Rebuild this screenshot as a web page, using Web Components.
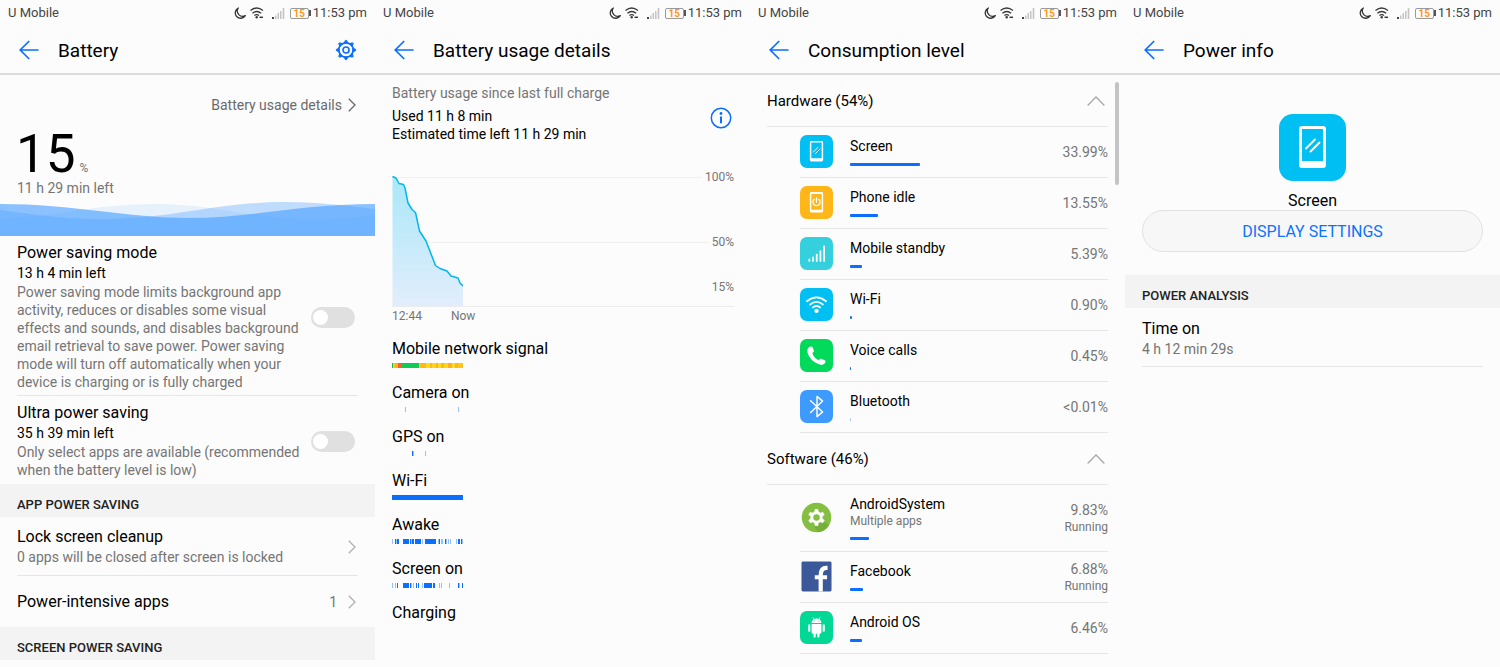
<!DOCTYPE html>
<html lang="en">
<head>
<meta charset="utf-8">
<meta name="viewport" content="width=device-width, initial-scale=1">
<title>Battery</title>
<style>
  :root {
    --accent: #0a6eff;
    --ink: #000;
    --muted: #757575;
    --rule: #e6e6e6;
    --band: #f3f3f3;
  }
  body {
    margin: 0;
    background: #fcfcfc;
    color: var(--ink);
    font-family: Roboto, "Liberation Sans", sans-serif;
    font-size: 16px;
    line-height: 20px;
  }
  main {
    display: grid;
    grid-template-columns: repeat(4, minmax(0, 1fr));
  }
</style>
</head>
<body>
<main>
  <phone-screen heading="Battery" settings>
    <battery-summary level="15" left="11 h 29 min left"></battery-summary>
    <toggle-row heading="Power saving mode" left="13 h 4 min left">Power saving mode limits background app activity, reduces or disables some visual effects and sounds, and disables background email retrieval to save power. Power saving mode will turn off automatically when your device is charging or is fully charged</toggle-row>
    <toggle-row heading="Ultra power saving" left="35 h 39 min left" last>Only select apps are available (recommended when the battery level is low)</toggle-row>
    <section-head>APP POWER SAVING</section-head>
    <link-row heading="Lock screen cleanup" note="0 apps will be closed after screen is locked"></link-row>
    <link-row heading="Power-intensive apps" value="1" last></link-row>
    <section-head>SCREEN POWER SAVING</section-head>
  </phone-screen>

  <phone-screen heading="Battery usage details">
    <usage-summary></usage-summary>
    <level-chart></level-chart>
    <time-line heading="Mobile network signal" kind="signal"></time-line>
    <time-line heading="Camera on" spans="13 1 l,66 1 l"></time-line>
    <time-line heading="GPS on" spans="20 1,21 1 l,33 1 l"></time-line>
    <time-line heading="Wi-Fi" spans="0 71"></time-line>
    <time-line heading="Awake" spans="0 1 l,3 1,4 1 l,5 1,6 1,11 4,15 2,18 1,19 1 l,20 2,23 2,25 4,30 1 l,33 9,42 2,46 1 l,47 1,49 2 l,53 1,54 1 l,56 1 l,58 1 l,64 1 l,66 1,67 1,69 1,70 1 l"></time-line>
    <time-line heading="Screen on" spans="0 1 l,3 1 l,5 1,11 4,15 2,18 1,19 1 l,21 1 l,24 1,26 1,30 1 l,32 2,34 6,41 2,47 1 l,49 1 l,57 1 l,66 1,67 1 l,70 1"></time-line>
    <time-line heading="Charging"></time-line>
  </phone-screen>

  <phone-screen heading="Consumption level" scrolled>
    <usage-group heading="Hardware (54%)">
      <usage-row icon="screen" heading="Screen" value="33.99%" bar="70"></usage-row>
      <usage-row icon="idle" heading="Phone idle" value="13.55%" bar="28"></usage-row>
      <usage-row icon="standby" heading="Mobile standby" value="5.39%" bar="12"></usage-row>
      <usage-row icon="wifi" heading="Wi-Fi" value="0.90%" bar="2"></usage-row>
      <usage-row icon="call" heading="Voice calls" value="0.45%" bar="1"></usage-row>
      <usage-row icon="bluetooth" heading="Bluetooth" value="&lt;0.01%" bar="1" faint></usage-row>
    </usage-group>
    <usage-group heading="Software (46%)">
      <usage-row icon="system" heading="AndroidSystem" note="Multiple apps" value="9.83%" state="Running" bar="19"></usage-row>
      <usage-row icon="facebook" heading="Facebook" value="6.88%" state="Running" bar="13"></usage-row>
      <usage-row icon="android" heading="Android OS" value="6.46%" bar="12"></usage-row>
    </usage-group>
  </phone-screen>

  <phone-screen heading="Power info">
    <app-hero icon="screen" heading="Screen" action="DISPLAY SETTINGS"></app-hero>
    <section-head>POWER ANALYSIS</section-head>
    <info-row heading="Time on" note="4 h 12 min 29s"></info-row>
  </phone-screen>
</main>

<script>
const ICONS = {
  back: ['0 0 20 20', '<path d="M10.200 1 1.200 10l9 9M1.200 10H19.600" fill="none" stroke="#0a6eff" stroke-width="1.700"/>'],
  gear: ['0 0 24 24', (() => {
    let teeth = '';
    for (let i = 0; i < 8; i++) teeth += `<path d="M10 4.500 11.300 1.500h1.400L14 4.500z" transform="rotate(${i * 45} 12 12)"/>`;
    return `<g stroke="#0a6eff"><g fill="#0a6eff" stroke-width="1" stroke-linejoin="round">${teeth}</g>
      <circle cx="12" cy="12" r="7.900" fill="none" stroke-width="1.900"/><circle cx="12" cy="12" r="3.300" fill="none" stroke-width="1.800"/></g>`;
  })()],
  info: ['0 0 22 22', '<circle cx="11" cy="11" r="9.700" fill="none" stroke="#0a6eff" stroke-width="1.500"/><path d="M11 9.600v6.600" stroke="#0a6eff" stroke-width="2"/><circle cx="11" cy="6.500" r="1.400" fill="#0a6eff"/>'],
  next: ['0 0 8 14', '<path d="M.8.8 7 7 .8 13.200" fill="none" stroke="currentColor" stroke-width="1.300"/>'],
  up: ['0 0 18 10', '<path d="M.6 9.500 9 1l8.400 8.500" fill="none" stroke="#a8a8a8" stroke-width="1.300"/>'],
  moon: ['0 0 12 12', '<path d="M4.300 1A5.400 5.400 0 1 0 11.300 8.600 5.300 5.300 0 0 1 4.300 1Z" fill="none" stroke="#333" stroke-width="1.300" stroke-linejoin="round"/>'],
  wifiSmall: ['0 0 14 12', '<g fill="none" stroke="#3a3a3a" stroke-width="1.300"><path d="M.5 3.400Q6.700-1.400 13 3.400M2.400 6.200Q6.700 2.800 11.200 6.200M4.400 8.500Q6.700 6.800 9 8.500"/></g><circle cx="6.700" cy="10.300" r="1.200" fill="#3a3a3a"/><path d="M9.500 10.300h3.500" stroke="#3a3a3a" stroke-width="1.500"/>'],
  signal: ['0 0 13 11', '<path d="M0 9h2v2H0z" fill="#444"/><path d="M3 7.500h1.500V11H3zM5.500 5H7v6H5.500zM8 3h1.500v8H8zM10.700 0h1.600v11h-1.600z" fill="#c4c4c4"/>'],
  screen: ['0 0 67 67', '<rect width="67" height="67" rx="14" fill="#00c0f3"/><path fill-rule="evenodd" d="M23 12h21a3 3 0 0 1 3 3v36a3 3 0 0 1-3 3H23a3 3 0 0 1-3-3V15a3 3 0 0 1 3-3ZM23 15v32h21V15Z" fill="#fff"/><path d="m27 34.500 9-9M31.500 37.500l9-9" stroke="#fff" stroke-width="1.900" stroke-linecap="round"/>'],
  idle: ['0 0 67 67', '<rect width="67" height="67" rx="14" fill="#ffb619"/><path fill-rule="evenodd" d="M23 12h21a3 3 0 0 1 3 3v36a3 3 0 0 1-3 3H23a3 3 0 0 1-3-3V15a3 3 0 0 1 3-3ZM23 16v32h21V16Z" fill="#fff"/><path d="M33.500 24v9M29 27a7.200 7.200 0 1 0 9 0" fill="none" stroke="#fff" stroke-width="2.600" stroke-linecap="round"/>'],
  standby: ['0 0 67 67', '<rect width="67" height="67" rx="14" fill="#35d0de"/><path d="M19 45.500v3M26.500 41.500v7M34 36v12.500M41.500 28.500v20M49 19v29.500" stroke="#fff" stroke-width="3.600" stroke-linecap="round"/>'],
  wifi: ['0 0 67 67', '<rect width="67" height="67" rx="14" fill="#00c0f3"/><g fill="none" stroke="#fff" stroke-width="3.600" stroke-linecap="round"><path d="M14 27q19.500-16 39 0M20.500 33.500q13-10.500 26 0M26 39.500q7.500-6 15 0"/></g><circle cx="33.500" cy="46.500" r="4.400" fill="#fff"/>'],
  call: ['0 0 67 67', '<rect width="67" height="67" rx="14" fill="#00d95a"/><path d="M18 17c2-2.500 6-3 8 .5l2 6c.6 2-1 4-3 5 2 7 7 12 13 14.500 1.500-2 3.500-3.500 5.500-2.700l6.500 3c2.500 1.200 2.500 4 0 6.500-3.500 3.500-8 3.500-13 1.200C26 46.500 17.500 37 15 26.500 14.200 22.500 15.500 19.500 18 17Z" fill="#fff"/>'],
  bluetooth: ['0 0 67 67', '<rect width="67" height="67" rx="14" fill="#3d9bff"/><path d="M21.500 22 46 44.500 34.500 54V13L46 22.500 21.500 45.500" fill="none" stroke="#fff" stroke-width="2.900" stroke-linejoin="round" stroke-linecap="round"/>'],
  system: ['0 0 67 67', (() => {
    let teeth = '';
    for (let i = 0; i < 6; i++) teeth += `<path d="M29.500 24 30.500 17h6L37.500 24z" transform="rotate(${i * 60} 33.500 33.500)"/>`;
    return `<circle cx="33.500" cy="33.500" r="30" fill="#84bf41"/><path d="M45 40 59 49A30 30 0 0 1 36 63.400L28 49Z" fill="#6fa635" opacity=".7"/><g fill="#fff" stroke="#fff" stroke-width="1" stroke-linejoin="round">${teeth}</g><circle cx="33.500" cy="33.500" r="9.500" fill="none" stroke="#fff" stroke-width="6"/><circle cx="33.500" cy="33.500" r="5.500" fill="#84bf41"/>`;
  })()],
  facebook: ['0 0 67 67', '<rect x="3" y="3" width="61" height="61" rx="3" fill="#3b5998"/><path d="M42 64V31c0-9 3-15 12-15h2M30 35h25" fill="none" stroke="#fff" stroke-width="8.500"/>'],
  android: ['0 0 67 67', '<rect width="67" height="67" rx="14" fill="#02d896"/><g fill="#fff"><path d="M23.500 24.500a10 9.500 0 0 1 20 0ZM23.500 26.500h20V43a3 3 0 0 1-3 3h-14a3 3 0 0 1-3-3Z"/></g><path d="M26.500 13.500l3 5M40.500 13.500l-3 5" stroke="#fff" stroke-width="1.500" stroke-linecap="round"/><path d="M18.800 29v11M48.200 29v11M29.700 45v7M37.300 45v7" stroke="#fff" stroke-width="4.400" stroke-linecap="round"/><circle cx="29" cy="21" r="1" fill="#02d896"/><circle cx="38" cy="21" r="1" fill="#02d896"/>']
};

class Base extends HTMLElement {
  connectedCallback() {
    if (this.shadowRoot) return;
    const tpl = document.createElement('template');
    tpl.innerHTML = `<style>
      :host { display: block; box-sizing: border-box; }
      *, ::before { box-sizing: border-box; }
      h1, h2, h3, p { margin: 0; font-weight: 400; font-size: 16px; line-height: 20px; }
      button { margin: 0; padding: 0; border: 0; background: none; font: inherit; color: inherit; cursor: pointer; }
      a { color: inherit; text-decoration: none; }
      ${this.css()}</style>${this.html()}`;
    this.attachShadow({ mode: 'open' }).append(tpl.content.cloneNode(true));
  }
  css() { return ''; }
  html() { return ''; }
  at(name) { return (this.getAttribute(name) || '').replace(/</g, '&lt;'); }
}
const define = (name, css, html) => customElements.define(name, class extends Base {
  css() { return typeof css === 'function' ? css(this) : css; }
  html() { return html(this); }
});

define('sys-icon', el => `
  :host { flex: none; width: ${el.at('w')}px; height: ${el.at('h') || el.at('w')}px; }
  svg { display: block; width: 100%; height: 100%; }`,
  el => { const [box, body] = ICONS[el.at('name')]; return `<svg viewBox="${box}" aria-hidden="true">${body}</svg>`; });

define('status-bar', `
  :host { display: flex; align-items: center; height: 26px; padding: 0 8px; font-size: 13px; line-height: 16px; color: #444; }
  .carrier { flex: 1; }
  .wifi { margin: 0 8px 0 4px; }
  .cell { display: flex; align-items: center; margin: 0 2px 0 5px; }
  .cell b { width: 19px; height: 11px; border: 1px solid #9a9a9a; border-radius: 2px; font-size: 10px; line-height: 9px; text-align: center; color: #ff9518; }
  .cell::after { content: ""; width: 2px; height: 6px; background: #555; }`,
  () => `<span class="carrier">U Mobile</span>
    <sys-icon name="moon" w="12"></sys-icon>
    <sys-icon class="wifi" name="wifiSmall" w="14" h="12"></sys-icon>
    <sys-icon name="signal" w="13" h="11"></sys-icon>
    <span class="cell"><b>15</b></span>
    <time>11:53 pm</time>`);

define('phone-screen', `
  :host { position: relative; min-width: 0; }
  header { display: flex; align-items: center; height: 49px; padding: 0 18px 0 19px; border-bottom: 2px solid #dcdcdc; }
  h1 { flex: 1; margin-left: 19px; padding-top: 2px; font-size: 19px; line-height: 24px; }
  .thumb { position: absolute; top: 82px; right: 6px; width: 4px; height: 103px; border-radius: 2px; background: #c4c4c4; }`,
  el => `<status-bar></status-bar>
    <header><button aria-label="Back"><sys-icon name="back" w="20"></sys-icon></button><h1>${el.at('heading')}</h1>
    ${el.hasAttribute('settings') ? '<button aria-label="Settings"><sys-icon name="gear" w="22"></sys-icon></button>' : ''}</header>
    <slot></slot>${el.hasAttribute('scrolled') ? '<div class="thumb"></div>' : ''}`);

define('battery-summary', `
  :host { color: var(--muted); }
  a { display: flex; justify-content: flex-end; align-items: center; gap: 6px; padding: 20px 19px 0 0; font-size: 14px; line-height: 20px; color: #6a6a6a; }
  .level { display: flex; align-items: baseline; gap: 4px; padding: 14px 16px 0; }
  .level span { font-size: 12px; line-height: 16px; }
  strong { font-size: 53px; line-height: 50px; font-weight: 400; color: #000; }
  .left { padding: 0 17px; font-size: 14px; line-height: 18px; }
  svg { display: block; width: 100%; height: 34px; margin-top: 5px; }`,
  el => `<a href="#details">Battery usage details<sys-icon name="next" w="8" h="14"></sys-icon></a>
    <div class="level"><strong>${el.at('level')}</strong><span>%</span></div>
    <p class="left">${el.at('left')}</p>
    <svg viewBox="0 0 375 34" preserveAspectRatio="none" aria-hidden="true" fill="#4da1ff">
      <path opacity=".12" d="M0 17C60 14 95 2 155 2S250 17 310 17 360 14 375 12V34H0Z"/>
      <path opacity=".35" d="M0 8C30 12 60 17 100 17 175 17 215 0 285 0 320 0 350 4 375 7V34H0Z"/>
      <path opacity=".65" d="M0 2C75 2 125 16 190 16 250 16 300 2 375 2V34H0Z"/>
    </svg>`);

define('toggle-row', el => `
  :host { padding: 0 17px; }
  .row { display: flex; align-items: center; justify-content: space-between; padding: 7px 3px ${el.hasAttribute('last') ? 5 : 4}px 0; ${el.hasAttribute('last') ? '' : 'border-bottom: 1px solid var(--rule);'} }
  label { width: 288px; }
  .left, .note { display: block; font-size: 14px; line-height: 18px; }
  .title { display: block; line-height: 20px; }
  .left { line-height: 20px; }
  .note { color: var(--muted); }
  input { appearance: none; flex: none; width: 44px; height: 21px; margin: 0; padding: 3px 2px; border-radius: 11px; background: #e0e0e0; }
  input::before { content: ""; display: block; width: 15px; height: 15px; border-radius: 50%; background: #fff; }
  input:checked { background: var(--accent); padding-left: 26px; }`,
  el => `<div class="row"><label for="t"><span class="title">${el.at('heading')}</span><span class="left">${el.at('left')}</span><span class="note"><slot></slot></span></label><input type="checkbox" id="t"></div>`);

define('section-head', `
  :host { padding: 11px 17px 3px; background: var(--band); }
  h2 { font-size: 13px; font-weight: 500; line-height: 19px; color: #222; }`,
  () => `<h2><slot></slot></h2>`);

define('link-row', el => `
  :host { padding: 0 17px; }
  a { display: flex; align-items: center; gap: 11px; min-height: ${el.hasAttribute('note') ? 59 : 51}px; padding: 1px 2px 0 0; ${el.hasAttribute('last') ? '' : 'border-bottom: 1px solid var(--rule);'} }
  .text { flex: 1; }
  p, .value { font-size: 14px; line-height: 20px; color: var(--muted); }
  sys-icon { color: #b0b0b0; }`,
  el => `<a href="#open"><span class="text"><h3>${el.at('heading')}</h3>${el.at('note') ? `<p>${el.at('note')}</p>` : ''}</span>
    <span class="value">${el.at('value')}</span><sys-icon name="next" w="8" h="14"></sys-icon></a>`);

define('usage-summary', `
  :host { display: flex; justify-content: space-between; align-items: center; padding: 8px 18px 0 17px; }
  p { font-size: 14px; line-height: 18px; }
  .since { line-height: 20px; margin-bottom: 4px; color: var(--muted); }
  button { margin-top: 9px; }`,
  () => `<div><p class="since">Battery usage since last full charge</p><p>Used 11 h 8 min</p><p>Estimated time left 11 h 29 min</p></div>
    <button aria-label="About battery usage"><sys-icon name="info" w="22"></sys-icon></button>`);

define('level-chart', `
  :host { padding: 26px 16px 15px 17px; font-size: 12px; line-height: 16px; color: var(--muted); }
  .plot { position: relative; border-bottom: 1px solid #ececec; padding-bottom: 11px; }
  .tick { display: flex; align-items: center; gap: 3px; }
  .tick i { flex: 1; height: 1px; background: #f0f0f0; }
  .half { margin-top: 49px; }
  .now { margin-top: 29px; justify-content: flex-end; }
  svg { position: absolute; left: 0; bottom: 0; width: 72px; height: 131px; }
  .axis { display: flex; gap: 29px; padding-top: 1px; }`,
  () => `<div class="plot">
      <div class="tick"><i></i>100%</div><div class="tick half"><i></i>50%</div><div class="tick now">15%</div>
      <svg viewBox="0 0 72 131" role="img" aria-label="Battery level since last charge">
        <defs><linearGradient id="g" x2="0" y2="1"><stop stop-color="#a9e8f8"/><stop offset="1" stop-color="#e2edfc"/></linearGradient></defs>
        <path d="M.5 1.500 4 3 7 8.500 11.500 9.500 13 13 16 28 20 34.500 23.500 37.500 27.500 56 34 66 43.500 90.500 48 93.500 55 96 59 101 66 103 68 108 71 111V131H.5Z" fill="url(#g)"/>
        <path d="M.5 1.500 4 3 7 8.500 11.500 9.500 13 13 16 28 20 34.500 23.500 37.500 27.500 56 34 66 43.500 90.500 48 93.500 55 96 59 101 66 103 68 108 71 111" fill="none" stroke="#00b7ee" stroke-width="1.500" stroke-linejoin="round"/>
      </svg></div>
    <div class="axis"><span>12:44</span><span>Now</span></div>`);

const SIGNAL = [[0,1,'#12b84a'],[1,1,'#d8e030'],[2,1,'#ffc61a'],[3,3,'#ffb020'],[6,3,'#f2622b'],[9,18,'#10cc55'],[27,2,'#ffc61a'],[29,4,'#ffb81c'],[33,1,'#b6dc3c'],[34,4,'#ffdc14'],[38,2,'#ffb81c'],[40,4,'#ffd414'],[44,2,'#ffb020'],[46,3,'#ffdc14'],[49,3,'#ffb81c'],[52,4,'#ffd814'],[56,4,'#ffb020'],[60,3,'#ffdc14'],[63,3,'#ffb81c'],[66,5,'#ffc61a']];
define('time-line', `
  :host { padding: 0 17px; }
  svg { display: block; width: 71px; height: 5px; margin: 4px 0 15px; }`,
  el => {
    const spans = el.at('kind') === 'signal' ? SIGNAL
      : el.at('spans').split(',').filter(Boolean).map(s => { const [x, w, l] = s.split(' '); return [x, w, l ? '#8fc3ff' : '#0a6eff']; });
    return `<h3>${el.at('heading')}</h3><svg viewBox="0 0 71 5" aria-hidden="true">${spans.map(([x, w, c]) => `<rect x="${x}" width="${w}" height="5" fill="${c}"/>`).join('')}</svg>`;
  });

define('usage-group', `
  :host { padding: 0 17px; }
  h2 { border-bottom: 1px solid var(--rule); }
  button { display: flex; align-items: center; justify-content: space-between; width: 100%; height: 51px; padding-right: 3px; font-size: 15px; }
  .list { margin-left: 33px; }`,
  el => `<h2><button aria-expanded="true">${el.at('heading')}<sys-icon name="up" w="18" h="10"></sys-icon></button></h2><div class="list"><slot></slot></div>`);

define('usage-row', el => `
  :host { display: flex; align-items: center; gap: 17px; padding: 10px 0 11px; border-bottom: 1px solid var(--rule); }
  sys-icon { margin: -2px 0; }
  .text { flex: 1; }
  h3 { font-size: 14px; line-height: 18px; }
  .note { font-size: 12px; line-height: 16px; color: var(--muted); }
  .bar { width: ${el.at('bar')}px; height: 3px; margin-top: 8px; border-radius: 1px; background: ${el.hasAttribute('faint') ? '#a5cfff' : 'var(--accent)'}; }
  .figures { margin: -4px 0; text-align: right; color: var(--muted); }
  .figures p { font-size: 14px; line-height: 18px; }
  .figures .state { font-size: 12px; line-height: 16px; }`,
  el => `<sys-icon name="${el.at('icon')}" w="33"></sys-icon>
    <div class="text"><h3>${el.at('heading')}</h3>${el.at('note') ? `<p class="note">${el.at('note')}</p>` : ''}<div class="bar"></div></div>
    <div class="figures"><p>${el.at('value')}</p>${el.at('state') ? `<p class="state">${el.at('state')}</p>` : ''}</div>`);

define('app-hero', `
  :host { display: flex; flex-direction: column; align-items: center; padding: 39px 17px 23px; }
  h2 { margin-top: 11px; line-height: 18px; }
  button { width: 100%; height: 42px; padding-top: 2px; border: 1px solid #e2e2e2; border-radius: 21px; background: #f7f7f7; color: #0a74ff; font-size: 16px; }`,
  el => `<sys-icon name="${el.at('icon')}" w="67"></sys-icon><h2>${el.at('heading')}</h2><button>${el.at('action')}</button>`);

define('info-row', `
  :host { margin: 0 17px; padding: 11px 0 7px; border-bottom: 1px solid var(--rule); }
  p { font-size: 14px; color: var(--muted); }`,
  el => `<h3>${el.at('heading')}</h3><p>${el.at('note')}</p>`);
</script>
</body>
</html>
